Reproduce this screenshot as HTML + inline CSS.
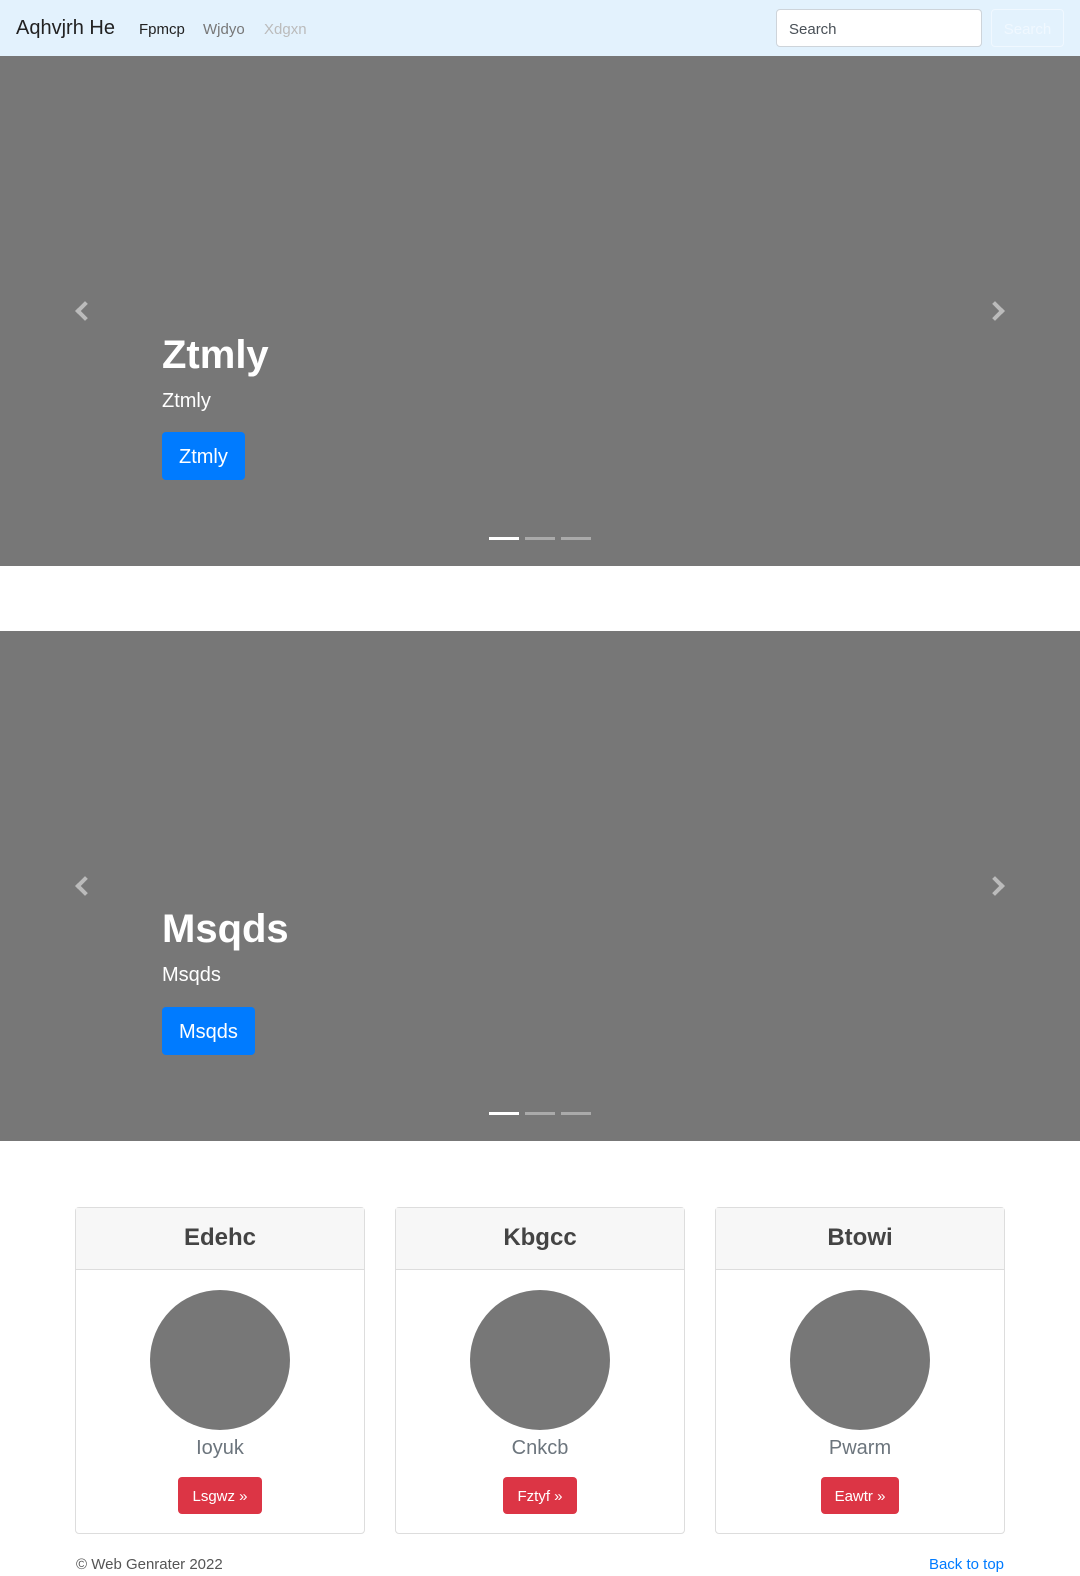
<!DOCTYPE html>
<html><head><meta charset="utf-8"><style>
*{box-sizing:border-box;margin:0;padding:0}
body{width:1080px;height:1576px;font-family:"Liberation Sans",sans-serif;background:#fff;position:relative;overflow:hidden;color:#212529}
nav{position:absolute;left:0;top:0;width:1080px;height:56px;background:#e3f2fd}
.brand{position:absolute;left:16px;top:17px;font-size:20px;color:#222}
.nl{position:absolute;top:21px;font-size:15px}
.inp{position:absolute;left:776px;top:9px;width:206px;height:38px;background:#fff;border:1px solid #ced4da;border-radius:4px;font-size:15px;color:#495057;padding:11px 12px}
.sbtn{position:absolute;left:991px;top:9px;width:73px;height:38px;border:1px solid #f0f8ff;border-radius:4px;color:#f0f8ff;font-size:15px;text-align:center;padding-top:11px}
.car{position:absolute;left:0;width:1080px;height:510px;background:#777}
.car h1{position:absolute;left:162px;font-size:40px;font-weight:bold;color:#fff}
.car p{position:absolute;left:162px;font-size:20px;color:#fff}
.car .b{position:absolute;left:162px;height:48px;background:#007bff;color:#fff;font-size:20px;border-radius:4px;padding:14px 17px 0}
.arr{position:absolute;top:248px;width:14px;height:14px;border-left:4px solid #bbb;border-bottom:4px solid #bbb}
.ind{position:absolute;top:481px;width:30px;height:3px;background:#aaa}
.card{position:absolute;top:1207px;width:290px;height:327px;border:1px solid #ddd;border-radius:4px}
.ch{height:62px;background:#f7f7f7;border-bottom:1px solid #ddd;text-align:center;font-size:24px;color:#444;padding-top:16px;font-weight:600}
.circ{width:140px;height:140px;border-radius:50%;background:#777;margin:20px auto 0}
.nm{text-align:center;font-size:20px;color:#6c757d;margin-top:7px;font-weight:300}
.rb{display:block;margin:17px auto 0;width:fit-content;background:#dc3545;color:#fff;font-size:15px;border-radius:4px;padding:11px 14px;height:37px}
</style></head><body>
<nav><div class="brand">Aqhvjrh He</div>
<div class="nl" style="left:139px;color:#222">Fpmcp</div>
<div class="nl" style="left:203px;color:#777">Wjdyo</div>
<div class="nl" style="left:264px;color:#bbb">Xdgxn</div>
<div class="inp">Search</div><div class="sbtn">Search</div></nav>

<div class="car" style="top:56px">
<div class="arr" style="left:78px;transform:rotate(45deg)"></div>
<div class="arr" style="left:988px;transform:rotate(-135deg)"></div>
<h1 style="top:277px">Ztmly</h1><p style="top:334px">Ztmly</p><div class="b" style="top:376px">Ztmly</div>
<div class="ind" style="left:489px;background:#fff"></div><div class="ind" style="left:525px"></div><div class="ind" style="left:561px"></div>
</div>

<div class="car" style="top:631px">
<div class="arr" style="left:78px;transform:rotate(45deg)"></div>
<div class="arr" style="left:988px;transform:rotate(-135deg)"></div>
<h1 style="top:276px">Msqds</h1><p style="top:333px">Msqds</p><div class="b" style="top:376px">Msqds</div>
<div class="ind" style="left:489px;background:#fff"></div><div class="ind" style="left:525px"></div><div class="ind" style="left:561px"></div>
</div>

<div class="card" style="left:75px"><div class="ch">Edehc</div><div class="circ"></div><div class="nm">Ioyuk</div><div class="rb">Lsgwz »</div></div>
<div class="card" style="left:395px"><div class="ch">Kbgcc</div><div class="circ"></div><div class="nm">Cnkcb</div><div class="rb">Fztyf »</div></div>
<div class="card" style="left:715px"><div class="ch">Btowi</div><div class="circ"></div><div class="nm">Pwarm</div><div class="rb">Eawtr »</div></div>

<div style="position:absolute;left:76px;top:1556px;font-size:15px;color:#555">© Web Genrater 2022</div>
<div style="position:absolute;right:76px;top:1556px;font-size:15px;color:#007bff">Back to top</div>
</body></html>
